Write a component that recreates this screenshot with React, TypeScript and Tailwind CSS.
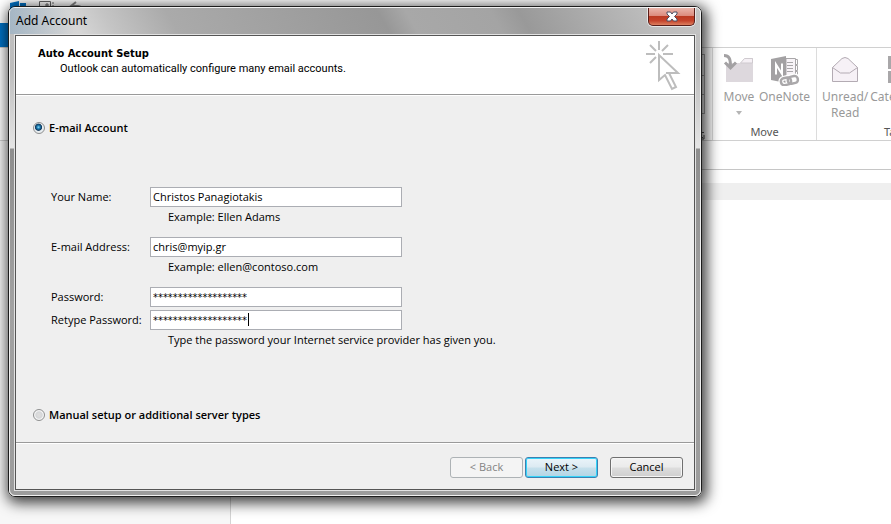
import { useState } from 'react';
import type { ReactNode } from 'react';
import clsx from 'clsx';

const uiFont = "font-['Noto_Sans','Open_Sans',sans-serif]";
const tahoma = "font-['DejaVu_Sans_Condensed','DejaVu_Sans',sans-serif]";
const openSans = "font-['Open_Sans','Noto_Sans',sans-serif]";

function MoveIcon() {
  return (
    <svg className="h-8 w-8" viewBox="0 0 32 32" fill="none">
      <path d="M3 28V9h15l4-5h8v24z" fill="#ddd8dd" />
      <path d="M17.500 9l4-4.500h8V9z" fill="#f5f0f5" stroke="#cfcacf" />
      <path d="M1 1.500c5 0 6.500 3 6.500 11" stroke="#a3a1a3" strokeWidth="3" />
      <path d="M2 8.500l5.500 5.500L13 8.500" stroke="#a3a1a3" strokeWidth="3" />
    </svg>
  );
}

function OneNoteIcon() {
  return (
    <svg className="h-8 w-8" viewBox="0 0 32 32" fill="none">
      <path d="M18 4.500h9.500v18H18z" fill="#f8f4f8" stroke="#a9a7a9" />
      <path d="M27.500 5.500h2v5h-2m0 1h2v5h-2m0 1h2v5h-2" stroke="#a9a7a9" />
      <path d="M19 8.500h6M19 11.500h6M19 14.500h6M19 17.500h6" stroke="#a9a7a9" />
      <path d="M3 5l15-3v27L3 26z" fill="#a3a1a3" />
      <path d="M8 20.500v-10l6 9.500V9.500" stroke="#fff" strokeWidth="2" />
      <g transform="rotate(-12 22 27)" strokeWidth="5">
        <rect x="13" y="23" width="10" height="7" rx="3" stroke="#fff" />
        <rect x="20" y="23" width="10" height="7" rx="3" stroke="#fff" />
        <rect x="13" y="23" width="10" height="7" rx="3" stroke="#aaa8aa" strokeWidth="2.500" />
        <rect x="20" y="23" width="10" height="7" rx="3" stroke="#aaa8aa" strokeWidth="2.500" />
      </g>
    </svg>
  );
}

function EnvelopeIcon() {
  return (
    <svg className="h-8 w-8" viewBox="0 0 32 32" fill="none" stroke="#b3abb3">
      <path d="M3.500 13.500L13 4.500q3-2 6 0l9.500 9v14h-25z" fill="#f6f1f6" />
      <path d="M3.500 13.500l8 5.500h9l8-5.500" />
    </svg>
  );
}

function CategorizeIcon() {
  return (
    <svg className="h-8 w-8" viewBox="0 0 32 32" fill="#a9a7a9">
      <path d="M3 2h12v13H3zM17 2h12v13H17zM3 17h12v12H3zM17 17h12v12H17z" />
    </svg>
  );
}

function RibbonButton({ icon, children }: { icon: ReactNode; children: ReactNode }) {
  return (
    <button type="button" className="flex flex-col items-center gap-[3px] whitespace-nowrap text-xs leading-4 text-[#999]">
      {icon}
      <span>{children}</span>
    </button>
  );
}

function OutlookWindow() {
  return (
    <div className={clsx('flex min-h-screen flex-col overflow-hidden bg-white', uiFont)}>
      <div className="flex h-[23px] items-start gap-3 pl-[10px]">
        <svg className="h-4 w-4" viewBox="0 0 16 16" fill="#0072c6">
          <path d="M0 3l9-2v14l-9-2zM10 3h6v9h-6z" />
        </svg>
        <svg className="h-4 w-[18px]" viewBox="0 0 18 16" fill="none" stroke="#666">
          <path d="M1.500 1.500h11v9h-11zM8 4h2v2H8zM14 3h2M14 6h2" />
        </svg>
        <svg className="h-4 w-4" viewBox="0 0 16 16" fill="none" stroke="#888" strokeWidth="2">
          <path d="M8 2L3 6l5 4M3 6h7q4 0 4 5" />
        </svg>
      </div>
      <div className="flex h-6">
        <div className="w-[60px] bg-[#0072c6]" />
      </div>

      <div className="flex h-[94px] shrink-0 border-y border-[#d0d0d0]">
        <div className="flex w-[713px] shrink-0 flex-col items-end border-r border-[#dcdcdc] pr-[7px] pt-1.5">
          <div className="h-[60px] w-5 border border-[#aaa]">
            <div className="mt-5 h-5 border-y border-[#aaa]" />
          </div>
          <svg className="mt-[18px] h-2 w-2" viewBox="0 0 8 8" fill="none" stroke="#555">
            <path d="M.500 7V.500H7M3 3l3 3M7 3v4H3" />
          </svg>
        </div>
        <div className="flex w-[103px] shrink-0 flex-col justify-between pt-1.5">
          <div className="flex justify-center gap-1 pl-1">
            <RibbonButton icon={<MoveIcon />}>
              Move
              <svg className="mx-auto mt-1.5 h-1 w-2" viewBox="0 0 8 4" fill="#b5b5b5">
                <path d="M1 0h6L4 4z" />
              </svg>
            </RibbonButton>
            <RibbonButton icon={<OneNoteIcon />}>OneNote</RibbonButton>
          </div>
          <span className="text-center text-[11px] leading-4 text-[#555]">Move</span>
        </div>
        <div className="flex min-w-0 flex-1 flex-col justify-between overflow-hidden border-l border-[#dcdcdc] pl-[5px] pt-1.5">
          <div className="flex items-start gap-0.5">
            <RibbonButton icon={<EnvelopeIcon />}>
              Unread/
              <br />
              Read
            </RibbonButton>
            <RibbonButton icon={<CategorizeIcon />}>Categorize</RibbonButton>
          </div>
          <span className="pl-[62px] text-[11px] leading-4 text-[#555]">Tags</span>
        </div>
      </div>

      <div className="flex flex-1">
        <div className="w-[231px] border-r border-[#d4d4d4] bg-[#f7f7f7]" />
        <div className="flex-1">
          <div className="h-[29px] border-b border-[#c6c6c6]" />
          <div className="mt-[13px] h-[17px] bg-[#efefef]" />
        </div>
      </div>
    </div>
  );
}

function WizardIcon() {
  return (
    <svg className="h-[52px] w-9" viewBox="0 0 36 52" fill="none" stroke="#bdbdbd" strokeWidth="2">
      <path d="M14 1v9M1 14h9M18 14h10M5 5l6 6M23 5l-6 6M5 23l6-6" />
      <path d="M14 15v25l6-5 7 14 4-2-7-14h9z" />
      <path d="M24 33h-3" />
    </svg>
  );
}

interface RadioProps {
  id: string;
  label: string;
  checked: boolean;
  onChange: () => void;
}

function SetupRadio({ id, label, checked, onChange }: RadioProps) {
  return (
    <div className="flex h-5 items-center gap-1 pl-[17px]">
      <input
        id={id}
        type="radio"
        name="setup"
        checked={checked}
        onChange={onChange}
        className="h-3 w-3 appearance-none rounded-full border border-[#8e8f8f] bg-[radial-gradient(circle,#dcdcdc_20%,#d4d6d8_45%,#f4f4f4_60%)] checked:bg-[radial-gradient(circle_at_45%_42%,#8fd8f5_0%,#1b7fb5_20%,#12375a_40%,#e8edf0_50%)]"
      />
      <label htmlFor={id} className={clsx('text-[11px] font-semibold leading-4 text-black', openSans)}>
        {label}
      </label>
    </div>
  );
}

interface FieldProps {
  id: string;
  label: string;
  value: string;
  onChange: (value: string) => void;
  masked?: boolean;
  caret?: boolean;
}

function Field({ id, label, value, onChange, masked, caret }: FieldProps) {
  return (
    <div className="flex h-5 items-center">
      <label htmlFor={id} className="w-[99px] shrink-0 whitespace-nowrap">
        {label}
      </label>
      <div className="relative w-[252px]">
        <input
          id={id}
          type="text"
          value={value}
          autoComplete="off"
          onChange={(e) => onChange(e.target.value)}
          className={clsx(
            'block h-5 w-full border border-[#abadb3] bg-white px-0.5 outline-none',
            masked ? tahoma : 'pb-0.5'
          )}
        />
        {caret && <span className="absolute left-[98px] top-[3px] h-[13px] w-px bg-black" />}
      </div>
    </div>
  );
}

function Hint({ children }: { children: ReactNode }) {
  return <p className="pl-[117px] leading-5">{children}</p>;
}

function AddAccountDialog() {
  const [mode, setMode] = useState('email');
  const [name, setName] = useState('Christos Panagiotakis');
  const [email, setEmail] = useState('chris@myip.gr');
  const [password, setPassword] = useState('*******************');
  const [retype, setRetype] = useState('*******************');

  return (
    <div
      role="dialog"
      aria-labelledby="dialog-title"
      className={clsx(
        'w-full max-w-[694px] rounded-[7px] border border-[#1c1c1c] text-[11px] text-black shadow-[2px_3px_14px_3px_rgba(0,0,0,0.75)]',
        openSans
      )}
    >
      <div className="rounded-md border border-[#f0f0f0] bg-[linear-gradient(180deg,#c2c2c2_0px,#bcbcbc_60px,#e4e4e4_140px,#8e8e8e_141px,#a2a2a2_300px,#9c9c9c_100%)] px-1 pb-1">
        <div className="-mx-1 flex h-[26px] items-start justify-between rounded-t-[5px] bg-[linear-gradient(90deg,rgba(90,140,180,0.35)_0%,rgba(90,140,180,0)_100%),linear-gradient(60deg,#cccccc_0%,#d6d6d6_10%,#c4c4c4_15%,#aaaaaa_24%,#a0a0a0_40%,#979797_54%,#a8a8a8_58%,#a4a4a4_70%,#999999_74%,#bcbcbc_92%,#c4c4c4_100%)] bg-[size:64px_100%,100%_100%] bg-no-repeat pl-1.5 pr-[5px]">
          <h1 id="dialog-title" className="pt-[5px] font-['Noto_Sans','Open_Sans',sans-serif] text-xs leading-4">
            Add Account
          </h1>
          <button
            type="button"
            aria-label="Close"
            className="flex h-[18px] w-[47px] items-center justify-center rounded-b-[5px] border border-t-0 border-[#5a1d18] bg-[linear-gradient(180deg,#eab5ab_0%,#dc8b7d_45%,#bb3a22_50%,#c5432b_75%,#dd8060_100%)] shadow-[0_0_0_1px_rgba(255,255,255,0.6)]"
          >
            <svg className="h-[11px] w-3" viewBox="0 0 12 11" fill="none">
              <path d="M1 1h3.500L6 3l1.500-2H11v2L8.500 5.500 11 8v2H7.500L6 8l-1.500 2H1V8l2.500-2.500L1 3z" fill="#fff" stroke="#4a4f63" />
            </svg>
          </button>
        </div>

        <div className="border border-[#e2e2e2]">
          <div className="border border-[#555] bg-[#efefef]">
            <header className="flex h-[60px] justify-between border-b border-white bg-white shadow-[inset_0_-1px_0_#9a9a9a]">
              <div className="pl-[22px] pt-2.5 leading-[15px]">
                <h2 className={clsx('font-bold', tahoma)}>Auto Account Setup</h2>
                <p className="pl-[22px] font-[Roboto,'Liberation_Sans',sans-serif]">
                  Outlook can automatically configure many email accounts.
                </p>
              </div>
              <div className="pr-[13px] pt-1">
                <WizardIcon />
              </div>
            </header>

            <form onSubmit={(e) => e.preventDefault()}>
              <div className="pb-[17px] pt-[22px]">
                <SetupRadio id="mode-email" label="E-mail Account" checked={mode === 'email'} onChange={() => setMode('email')} />
                <div className="pb-[55px] pl-[35px] pt-[49px]">
                  <Field id="name" label="Your Name:" value={name} onChange={setName} />
                  <Hint>Example: Ellen Adams</Hint>
                  <div className="mt-2.5">
                    <Field id="email" label="E-mail Address:" value={email} onChange={setEmail} />
                    <Hint>Example: ellen@contoso.com</Hint>
                  </div>
                  <div className="mt-2.5 flex flex-col gap-[3px]">
                    <Field id="password" label="Password:" value={password} onChange={setPassword} masked />
                    <Field id="retype" label="Retype Password:" value={retype} onChange={setRetype} masked caret />
                  </div>
                  <Hint>Type the password your Internet service provider has given you.</Hint>
                </div>
                <SetupRadio
                  id="mode-manual"
                  label="Manual setup or additional server types"
                  checked={mode === 'manual'}
                  onChange={() => setMode('manual')}
                />
              </div>

              <footer className="flex justify-end gap-0.5 border-t border-[#9a9a9a] pb-[11px] pr-[11px] pt-3.5 shadow-[inset_0_1px_0_#fff]">
                <button type="button" disabled className="h-[21px] w-[73px] rounded-[3px] border border-[#adb2b5] bg-[#f4f4f4] text-[#838383]">
                  &lt; Back
                </button>
                <button
                  type="submit"
                  className="h-[21px] w-[73px] rounded-[3px] border border-[#3c7fb1] bg-[linear-gradient(180deg,#eaf4fa_0%,#dceaf2_48%,#c6e0ec_52%,#b2d4e4_100%)] shadow-[inset_0_0_0_1px_#35d3f8]"
                >
                  Next &gt;
                </button>
                <button
                  type="button"
                  className="ml-2.5 h-[21px] w-[73px] rounded-[3px] border border-[#707070] bg-[linear-gradient(180deg,#f2f2f2_0%,#ebebeb_48%,#dddddd_52%,#cfcfcf_100%)] shadow-[inset_0_0_0_1px_#f6f6f6]"
                >
                  Cancel
                </button>
              </footer>
            </form>
          </div>
        </div>
      </div>
    </div>
  );
}

export default function App() {
  return (
    <main className="relative">
      <OutlookWindow />
      <div className="absolute inset-x-2 top-1.5">
        <AddAccountDialog />
      </div>
    </main>
  );
}
